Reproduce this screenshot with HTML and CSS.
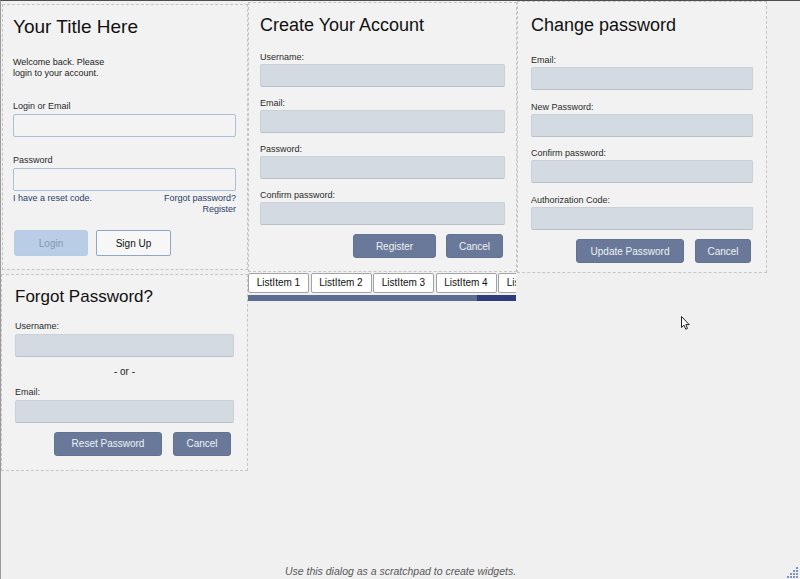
FILE: index.html
```html
<!DOCTYPE html>
<html lang="en">
<head>
<meta charset="utf-8">
<title>Scratchpad</title>
<link rel="stylesheet" href="styles.css">
</head>
<body>
<div class="canvas">
  <div class="row row-top">
    <section class="panel login">
      <h1 class="title title-lg">Your Title Here</h1>
      <p class="welcome">Welcome back. Please<br>login to your account.</p>
      <label class="lbl lbl-first">Login or Email</label>
      <div class="input input-light"></div>
      <label class="lbl lbl-pw">Password</label>
      <div class="input input-light"></div>
      <div class="links">
        <span class="link">I have a reset code.</span>
        <span class="link">Forgot password?</span>
      </div>
      <div class="links links-end"><span class="link">Register</span></div>
      <div class="login-actions">
        <button class="btn-login">Login</button>
        <button class="btn-signup">Sign Up</button>
      </div>
    </section>

    <section class="panel create">
      <h2 class="title title-md">Create Your Account</h2>
      <div class="fields fields-create">
        <div class="field"><label class="lbl">Username:</label><div class="input"></div></div>
        <div class="field"><label class="lbl">Email:</label><div class="input"></div></div>
        <div class="field"><label class="lbl">Password:</label><div class="input"></div></div>
        <div class="field"><label class="lbl">Confirm password:</label><div class="input"></div></div>
      </div>
      <div class="actions actions-create">
        <button class="btn btn-register">Register</button>
        <button class="btn btn-cancel">Cancel</button>
      </div>
    </section>

    <section class="panel change">
      <h2 class="title title-md">Change password</h2>
      <div class="fields fields-change">
        <div class="field"><label class="lbl">Email:</label><div class="input"></div></div>
        <div class="field"><label class="lbl">New Password:</label><div class="input"></div></div>
        <div class="field"><label class="lbl">Confirm password:</label><div class="input"></div></div>
        <div class="field"><label class="lbl">Authorization Code:</label><div class="input"></div></div>
      </div>
      <div class="actions actions-change">
        <button class="btn btn-update">Update Password</button>
        <button class="btn btn-cancel2">Cancel</button>
      </div>
    </section>
  </div>

  <div class="row row-bottom">
    <section class="panel forgot">
      <h2 class="title title-sm">Forgot Password?</h2>
      <label class="lbl lbl-user">Username:</label>
      <div class="input"></div>
      <div class="or">- or -</div>
      <label class="lbl lbl-email">Email:</label>
      <div class="input"></div>
      <div class="actions actions-forgot">
        <button class="btn btn-reset">Reset Password</button>
        <button class="btn btn-cancel3">Cancel</button>
      </div>
    </section>

    <div class="list">
      <div class="list-items">
        <div class="list-item">ListItem 1</div>
        <div class="list-item">ListItem 2</div>
        <div class="list-item">ListItem 3</div>
        <div class="list-item">ListItem 4</div>
        <div class="list-item">ListItem 5</div>
      </div>
      <div class="list-bar"></div>
    </div>
  </div>

  <p class="hint">Use this dialog as a scratchpad to create widgets.</p>

  <svg class="cursor" width="10" height="14" viewBox="0 0 10 14" aria-hidden="true">
    <path d="M0.5 0.5 L0.5 11.5 L3 9.2 L4.8 13.2 L6.5 12.4 L4.8 8.6 L8.2 8.6 Z" fill="#fff" stroke="#222" stroke-width="1"/>
  </svg>
  <svg class="grip" width="12" height="12" viewBox="0 0 12 12" aria-hidden="true">
    <g fill="#7f92c4">
      <rect x="9" y="1" width="2" height="2"/>
      <rect x="6" y="4" width="2" height="2"/><rect x="9" y="4" width="2" height="2"/>
      <rect x="3" y="7" width="2" height="2"/><rect x="6" y="7" width="2" height="2"/><rect x="9" y="7" width="2" height="2"/>
      <rect x="0" y="10" width="2" height="2"/><rect x="3" y="10" width="2" height="2"/><rect x="6" y="10" width="2" height="2"/><rect x="9" y="10" width="2" height="2"/>
    </g>
  </svg>
</div>
</body>
</html>
```

FILE: styles.css
```css
* { box-sizing: border-box; }
html, body { margin: 0; padding: 0; background: #f0f0f0; }
body { font-family: "Liberation Sans", Arial, sans-serif; color: #222; }

.canvas {
  position: relative;
  width: 800px;
  height: 579px;
  border-top: 1px solid #4d4d4d;
  border-left: 1px solid #9a9a9a;
  display: flex;
  flex-direction: column;
  overflow: hidden;
}

.row { display: flex; align-items: flex-start; }

.panel {
  border: 1px dashed #c6c6c6;
  background: #f2f2f2;
  display: flex;
  flex-direction: column;
}

.title { margin: 0; font-weight: normal; color: #111; line-height: 22px; }
.title-lg { font-size: 19px; }
.title-md { font-size: 18px; }
.title-sm { font-size: 17px; }

.lbl { display: block; font-size: 9px; line-height: 11px; margin-bottom: 1px; color: #2a2a2a; }

.input {
  height: 23px;
  background: #d3dae1;
  border: 1px solid #c9d0d7;
  border-bottom-color: #b9c0c7;
  border-radius: 2px;
}
.input-light { background: #f3f3f3; border: 1px solid #a9bfdb; }

button { font-family: "Liberation Sans", Arial, sans-serif; font-size: 10px; cursor: default; padding: 0; }

/* Login */
.login { width: 246px; height: 266px; margin: 3px 0 0 1px; padding: 11px 11px 0 10px; }
.welcome { margin: 19px 0 0; font-size: 9px; line-height: 11px; color: #222; }
.lbl-first { margin-top: 22px; margin-bottom: 2px; }
.lbl-pw { margin-top: 18px; margin-bottom: 2px; }
.links { display: flex; justify-content: space-between; font-size: 9px; line-height: 11px; margin-top: 2px; }
.links-end { justify-content: flex-end; margin-top: 0; }
.link { color: #2c3f6a; }
.login-actions { display: flex; gap: 8px; margin-top: 15px; padding-left: 1px; }
.btn-login {
  width: 74px; height: 26px; border: 1px solid #b6cbe4; border-radius: 3px;
  background: #b9cde6; color: #8498b3;
}
.btn-signup {
  width: 75px; height: 26px; border: 1px solid #8fa6c8; border-radius: 2px;
  background: #f7f7f7; color: #111;
}

/* Create */
.create { width: 269px; height: 270px; margin-top: 1px; padding: 11px 11px 0 11px; }
.fields { display: flex; flex-direction: column; }
.fields-create { margin-top: 16px; gap: 11px; }
.fields-change { margin-top: 19px; gap: 11.5px; }
.actions { display: flex; justify-content: flex-end; }
.btn {
  height: 24px; border: 1px solid #63728f; border-radius: 3px;
  background: #6a7999; color: #eef1f6;
}
.actions-create { margin-top: 9px; gap: 10px; padding-right: 2px; }
.btn-register { width: 83px; }
.btn-cancel { width: 57px; }

/* Change */
.change { width: 250px; height: 272px; padding: 12px 13px 0 13px; }
.actions-change { margin-top: 9.5px; gap: 11px; padding-right: 2px; }
.btn-update { width: 108px; }
.btn-cancel2 { width: 56px; }

/* Forgot */
.forgot { width: 247px; height: 197px; margin-top: 1px; padding: 11px 13px 0 13px; }
.lbl-user { margin-top: 13px; margin-bottom: 2px; }
.or { margin-top: 9px; text-align: center; font-size: 10px; line-height: 11px; color: #222; }
.lbl-email { margin-top: 9.5px; margin-bottom: 2px; }
.actions-forgot { margin-top: 9px; gap: 11px; padding-right: 3px; }
.btn-reset { width: 108px; }
.btn-cancel3 { width: 58px; }

/* List */
.list { width: 268px; display: flex; flex-direction: column; overflow: hidden; }
.list-items { display: flex; gap: 1.5px; padding-left: 0; }
.list-item {
  flex: 0 0 61px; height: 20px; border: 1px solid #a3a3a3; border-radius: 2px;
  background: #fff; font-size: 10px; line-height: 18px; text-align: center; color: #111;
  white-space: nowrap; overflow: hidden;
}
.list-bar {
  height: 6px; margin-top: 1.5px;
  background: linear-gradient(to right, #5d6d91 0, #5d6d91 229px, #2f3b7a 229px, #2f3b7a 100%);
}

/* Hint */
.hint {
  margin: auto 0 1px; text-align: center; font-style: italic;
  font-size: 10.5px; line-height: 14px; color: #5a5a5a;
}

.cursor { position: absolute; left: 680px; top: 315px; }
.grip { position: absolute; right: 1px; bottom: 1px; }
```
